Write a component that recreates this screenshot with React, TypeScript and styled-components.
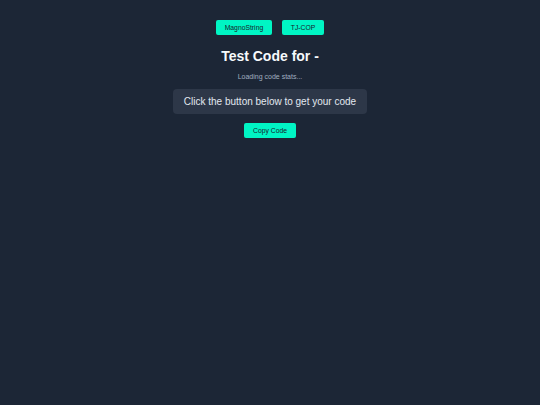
import { createGlobalStyle, styled } from "styled-components";

const GlobalStyle = createGlobalStyle`
  html, body {
    margin: 0;
    padding: 0;
    background-color: #1c2636;
    font-family: "Liberation Sans", Arial, sans-serif;
  }
`;

const Page = styled.div`
  min-height: 405px;
  display: flex;
  flex-direction: column;
  align-items: center;
  padding-top: 20px;
  box-sizing: border-box;
`;

const Tabs = styled.div`
  display: flex;
  gap: 10.6px;
`;

const Button = styled.button`
  background-color: #00f5c4;
  color: #1a202c;
  border: 0;
  border-radius: 2px;
  padding: 4.2px 8.5px;
  font-family: "Liberation Sans", Arial, sans-serif;
  font-size: 6.8px;
  line-height: normal;
  cursor: pointer;
`;

const Title = styled.h1`
  margin: 13px 0 0;
  font-size: 14px;
  font-weight: 700;
  line-height: normal;
  color: #f7fafc;
`;

const Status = styled.p`
  margin: 8.2px 0 0;
  font-size: 7px;
  line-height: normal;
  color: #a0aec0;
`;

const CodeBox = styled.div`
  margin-top: 9px;
  padding: 7px 10.5px;
  background-color: #2d3748;
  border-radius: 4px;
  color: #e2e8f0;
  font-size: 10px;
  line-height: normal;
`;

const CopyButton = styled(Button)`
  margin-top: 9px;
`;

export default function App() {
  const onCopy = () => {
    // nothing to copy yet
  };
  return (
    <>
      <GlobalStyle />
      <Page>
        <Tabs>
          <Button>MagnoString</Button>
          <Button>TJ-COP</Button>
        </Tabs>
        <Title>Test Code for -</Title>
        <Status>Loading code stats...</Status>
        <CodeBox>Click the button below to get your code</CodeBox>
        <CopyButton onClick={onCopy}>Copy Code</CopyButton>
      </Page>
    </>
  );
}
